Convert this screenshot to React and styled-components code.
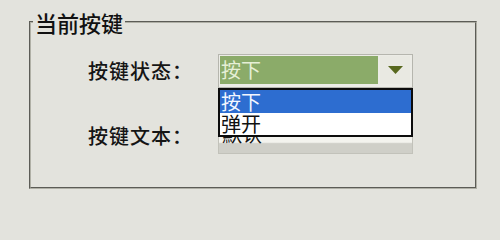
import React from "react";
import styled, { createGlobalStyle } from "styled-components";

const Global = createGlobalStyle`
  html, body { margin: 0; padding: 0; background: #e3e3dd; }
  body {
    width: 500px; height: 200px; overflow: hidden;
    font-family: "Noto Sans CJK SC", "Noto Sans", sans-serif;
    color: #161616;
  }
`;

const Page = styled.div`
  padding: 10px 0 0 29px;
`;

const Group = styled.fieldset`
  margin: 0;
  padding: 0;
  width: 448px;
  height: 179px;
  box-sizing: border-box;
  border: 2px groove #b0b0a6;
  min-inline-size: 0;
`;

const Legend = styled.legend`
  margin-left: 2px;
  padding: 0 2px;
  font-size: 22px;
  line-height: 24px;
  font-weight: 500;
  color: #111;
`;

const Form = styled.div`
  display: grid;
  grid-template-columns: 130px 195px;
  row-gap: 30px;
  padding: 20px 0 0 57px;
  align-items: center;
`;

const Label = styled.div`
  font-size: 20px;
  line-height: 24px;
  font-weight: 500;
  color: #151515;
  letter-spacing: 1px;
`;

const ComboWrap = styled.div`
  position: relative;
  height: 34px;
`;

const Combo = styled.div`
  display: flex;
  height: 34px;
  box-sizing: border-box;
  border: 1px solid #b6b6ae;
  padding: 1px 2px 3px 1px;
  gap: 2px;
  background: #ecece6;
`;

const Field = styled.div`
  flex: 1;
  background: #8bab69;
  color: #e6efd6;
  font-size: 20px;
  line-height: 28px;
  padding-left: 1px;
`;

const ArrowButton = styled.div`
  width: 30px;
  display: flex;
  align-items: center;
  justify-content: center;
  background: #e9e9e2;
`;

const DropList = styled.div`
  position: absolute;
  left: 0;
  top: 34px;
  width: 195px;
  box-sizing: border-box;
  border: 2px solid #0c0c0c;
  background: #fff;
  z-index: 2;
`;

const Option = styled.div`
  height: ${(p) => p.$h}px;
  line-height: ${(p) => p.$h}px;
  font-size: 20px;
  padding-left: 1px;
  background: ${(p) => (p.$active ? "#2d6dd0" : "#ffffff")};
  color: ${(p) => (p.$active ? "#f2f6ff" : "#111")};
`;

const TextBox = styled.div`
  height: 38px;
  margin-top: -2px;
  box-sizing: border-box;
  border: 1px solid #c2c2ba;
  background: linear-gradient(#f3f3ee 0%, #f3f3ee 70%, #cfcfc8 74%, #cfcfc8 100%);
  font-size: 20px;
  line-height: 24px;
  padding: 5px 0 0 3px;
  color: #111;
`;

export default function App() {
  return (
    <>
      <Global />
      <Page>
        <Group>
          <Legend>当前按键</Legend>
          <Form>
            <Label>按键状态：</Label>
            <ComboWrap>
              <Combo>
                <Field>按下</Field>
                <ArrowButton>
                  <svg width="15" height="8" viewBox="0 0 15 8">
                    <polygon points="0,0 15,0 7.5,8" fill="#58681e" />
                  </svg>
                </ArrowButton>
              </Combo>
              <DropList>
                <Option $active $h={23}>按下</Option>
                <Option $h={22}>弹开</Option>
              </DropList>
            </ComboWrap>
            <Label>按键文本：</Label>
            <TextBox>默认</TextBox>
          </Form>
        </Group>
      </Page>
    </>
  );
}
